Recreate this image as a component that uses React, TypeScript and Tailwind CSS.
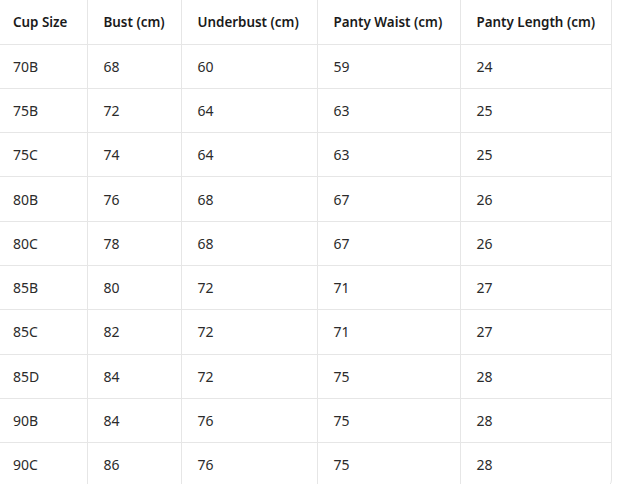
const headers = ["Cup Size", "Bust (cm)", "Underbust (cm)", "Panty Waist (cm)", "Panty Length (cm)"];

const rows = [
  ["70B", "68", "60", "59", "24"],
  ["75B", "72", "64", "63", "25"],
  ["75C", "74", "64", "63", "25"],
  ["80B", "76", "68", "67", "26"],
  ["80C", "78", "68", "67", "26"],
  ["85B", "80", "72", "71", "27"],
  ["85C", "82", "72", "71", "27"],
  ["85D", "84", "72", "75", "28"],
  ["90B", "84", "76", "75", "28"],
  ["90C", "86", "76", "75", "28"],
];

export default function App() {
  return (
    <div className="h-[484px] w-[620px] overflow-hidden bg-white font-['Noto_Sans',sans-serif]">
      <div className="-mt-px -ml-[4px] w-[616px] rounded-br-lg border border-[#e6e6e6]">
        <table className="w-[614px] table-fixed border-collapse text-[14px]">
          <colgroup>
            <col className="w-[90px]" />
            <col className="w-[94px]" />
            <col className="w-[136px]" />
            <col className="w-[143px]" />
            <col className="w-[151px]" />
          </colgroup>
          <thead>
            <tr className="h-[44px]">
              {headers.map((h) => (
                <th
                  key={h}
                  className="whitespace-nowrap border-r border-b border-[#e6e6e6] px-4 pt-px text-left text-[13.4px] font-semibold text-[#1a1a1a] last:border-r-0"
                >
                  {h}
                </th>
              ))}
            </tr>
          </thead>
          <tbody>
            {rows.map((r) => (
              <tr key={r[0]} className="h-[44.3px]">
                {r.map((c, i) => (
                  <td
                    key={i}
                    className="border-r border-b border-[#e6e6e6] px-4 text-[#2b2b2b] last:border-r-0"
                  >
                    {c}
                  </td>
                ))}
              </tr>
            ))}
          </tbody>
        </table>
      </div>
    </div>
  );
}
